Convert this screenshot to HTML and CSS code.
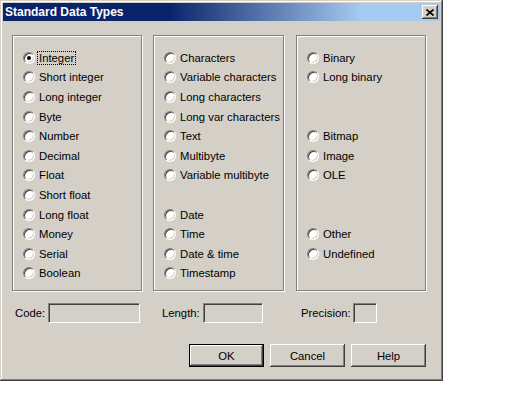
FILE: index.html
```html
<!DOCTYPE html>
<html lang="en">
<head>
  <meta charset="UTF-8" />
  <title>Standard Data Types</title>
  <link rel="stylesheet" href="styles.css">
</head>
<body>
  <div class="dialog">
    <div class="titlebar">
      <span class="title">Standard Data Types</span>
      <span class="close">
        <svg width="8" height="7" viewBox="0 0 8 7"><path d="M0.5 0.5 L7.5 6.5 M7.5 0.5 L0.5 6.5" stroke="#000" stroke-width="1.6" /></svg>
      </span>
    </div>

    <div class="groups">
      <div class="group">
        <label class="opt"><span class="radio checked"></span><span class="text focus">Integer</span></label>
        <label class="opt"><span class="radio"></span><span class="text">Short integer</span></label>
        <label class="opt"><span class="radio"></span><span class="text">Long integer</span></label>
        <label class="opt"><span class="radio"></span><span class="text">Byte</span></label>
        <label class="opt"><span class="radio"></span><span class="text">Number</span></label>
        <label class="opt"><span class="radio"></span><span class="text">Decimal</span></label>
        <label class="opt"><span class="radio"></span><span class="text">Float</span></label>
        <label class="opt"><span class="radio"></span><span class="text">Short float</span></label>
        <label class="opt"><span class="radio"></span><span class="text">Long float</span></label>
        <label class="opt"><span class="radio"></span><span class="text">Money</span></label>
        <label class="opt"><span class="radio"></span><span class="text">Serial</span></label>
        <label class="opt"><span class="radio"></span><span class="text">Boolean</span></label>
      </div>
      <div class="group">
        <label class="opt"><span class="radio"></span><span class="text">Characters</span></label>
        <label class="opt"><span class="radio"></span><span class="text">Variable characters</span></label>
        <label class="opt"><span class="radio"></span><span class="text">Long characters</span></label>
        <label class="opt"><span class="radio"></span><span class="text">Long var characters</span></label>
        <label class="opt"><span class="radio"></span><span class="text">Text</span></label>
        <label class="opt"><span class="radio"></span><span class="text">Multibyte</span></label>
        <label class="opt"><span class="radio"></span><span class="text">Variable multibyte</span></label>
        <div class="opt"></div>
        <label class="opt"><span class="radio"></span><span class="text">Date</span></label>
        <label class="opt"><span class="radio"></span><span class="text">Time</span></label>
        <label class="opt"><span class="radio"></span><span class="text">Date &amp; time</span></label>
        <label class="opt"><span class="radio"></span><span class="text">Timestamp</span></label>
      </div>
      <div class="group">
        <label class="opt"><span class="radio"></span><span class="text">Binary</span></label>
        <label class="opt"><span class="radio"></span><span class="text">Long binary</span></label>
        <div class="opt"></div>
        <div class="opt"></div>
        <label class="opt"><span class="radio"></span><span class="text">Bitmap</span></label>
        <label class="opt"><span class="radio"></span><span class="text">Image</span></label>
        <label class="opt"><span class="radio"></span><span class="text">OLE</span></label>
        <div class="opt"></div>
        <div class="opt"></div>
        <label class="opt"><span class="radio"></span><span class="text">Other</span></label>
        <label class="opt"><span class="radio"></span><span class="text">Undefined</span></label>
      </div>
    </div>

    <div class="fields">
      <div class="field field-code"><span class="label">Code:</span><span class="input"></span></div>
      <div class="field field-length"><span class="label">Length:</span><span class="input"></span></div>
      <div class="field field-precision"><span class="label">Precision:</span><span class="input"></span></div>
    </div>

    <div class="buttons">
      <button class="btn default">OK</button>
      <button class="btn">Cancel</button>
      <button class="btn">Help</button>
    </div>
  </div>
</body>
</html>
```

FILE: styles.css
```css
body {
  margin: 0;
  background: #fff;
  font-family: 'Liberation Sans', Arial, sans-serif;
  font-size: 11.3px;
  color: #000;
}
.dialog {
  width: 443px;
  height: 381px;
  box-sizing: border-box;
  padding: 3px;
  background: #d4d0c8;
  box-shadow: inset -1px -1px #404040, inset 1px 1px #d4d0c8,
              inset -2px -2px #808080, inset 2px 2px #fff;
}
.titlebar {
  height: 18px;
  display: flex;
  align-items: center;
  justify-content: space-between;
  padding: 0 2px;
  background: linear-gradient(90deg, #0a246a 0%, #0a246a 38%, #a6caf0 82%, #a6caf0 100%);
}
.title {
  color: #fff;
  font-weight: bold;
  font-size: 12px;
}
.close {
  width: 16px;
  height: 14px;
  box-sizing: border-box;
  display: flex;
  align-items: center;
  justify-content: center;
  background: #d4d0c8;
  box-shadow: inset -1px -1px #404040, inset 1px 1px #fff, inset -2px -2px #808080;
}
.groups {
  display: flex;
  gap: 11px;
  margin: 14px 0 0 9px;
}
.group {
  width: 130px;
  height: 256px;
  box-sizing: border-box;
  padding: 12px 0 0 10px;
  border: 1px solid #808080;
  box-shadow: inset 1px 1px #fff, 1px 1px #fff;
}
.group + .group {
  width: 131px;
}
.group + .group + .group {
  width: 130px;
  margin-left: 1px;
}
.opt {
  display: flex;
  align-items: center;
  height: 19.6px;
}
.radio {
  position: relative;
  width: 12px;
  height: 12px;
  box-sizing: border-box;
  border-radius: 50%;
  background: #fff;
  border: 1px solid;
  border-color: #808080 #fff #fff #808080;
  box-shadow: inset 1px 1px #404040, inset -1px -1px #d4d0c8;
  flex: none;
}
.radio.checked::after {
  content: '';
  position: absolute;
  left: 3px;
  top: 3px;
  width: 4px;
  height: 4px;
  border-radius: 50%;
  background: #000;
}
.text {
  margin-left: 4px;
  white-space: nowrap;
}
.text.focus {
  margin-left: 3px;
  padding: 0 1px 0 0;
  outline: 1px dotted #000;
  outline-offset: 0;
  border-left: 1px dotted transparent;
}
.fields {
  display: flex;
  align-items: center;
  margin: 12px 0 0 12px;
}
.field {
  display: flex;
  align-items: center;
}
.field-code .label { width: 33px; }
.field-code .input { width: 92px; }
.field-length { margin-left: 22px; }
.field-length .label { width: 41px; }
.field-length .input { width: 60px; }
.field-precision { margin-left: 38px; }
.field-precision .label { width: 52px; }
.field-precision .input { width: 24px; }
.input {
  height: 20px;
  box-sizing: border-box;
  background: #d4d0c8;
  border: 1px solid;
  border-color: #808080 #fff #fff #808080;
  box-shadow: inset 1px 1px #404040, inset -1px -1px #d4d0c8;
}
.buttons {
  display: flex;
  justify-content: flex-end;
  gap: 6px;
  margin: 21px 14px 0 0;
}
.btn {
  width: 75px;
  height: 23px;
  border: none;
  padding: 0;
  background: #d4d0c8;
  font-family: inherit;
  font-size: 11.3px;
  color: #000;
  box-shadow: inset -1px -1px #404040, inset 1px 1px #fff,
              inset -2px -2px #808080, inset 2px 2px #d4d0c8;
}
.btn.default {
  box-shadow: inset 0 0 0 1px #000, inset -2px -2px #404040, inset 2px 2px #fff,
              inset -3px -3px #808080;
}
```
